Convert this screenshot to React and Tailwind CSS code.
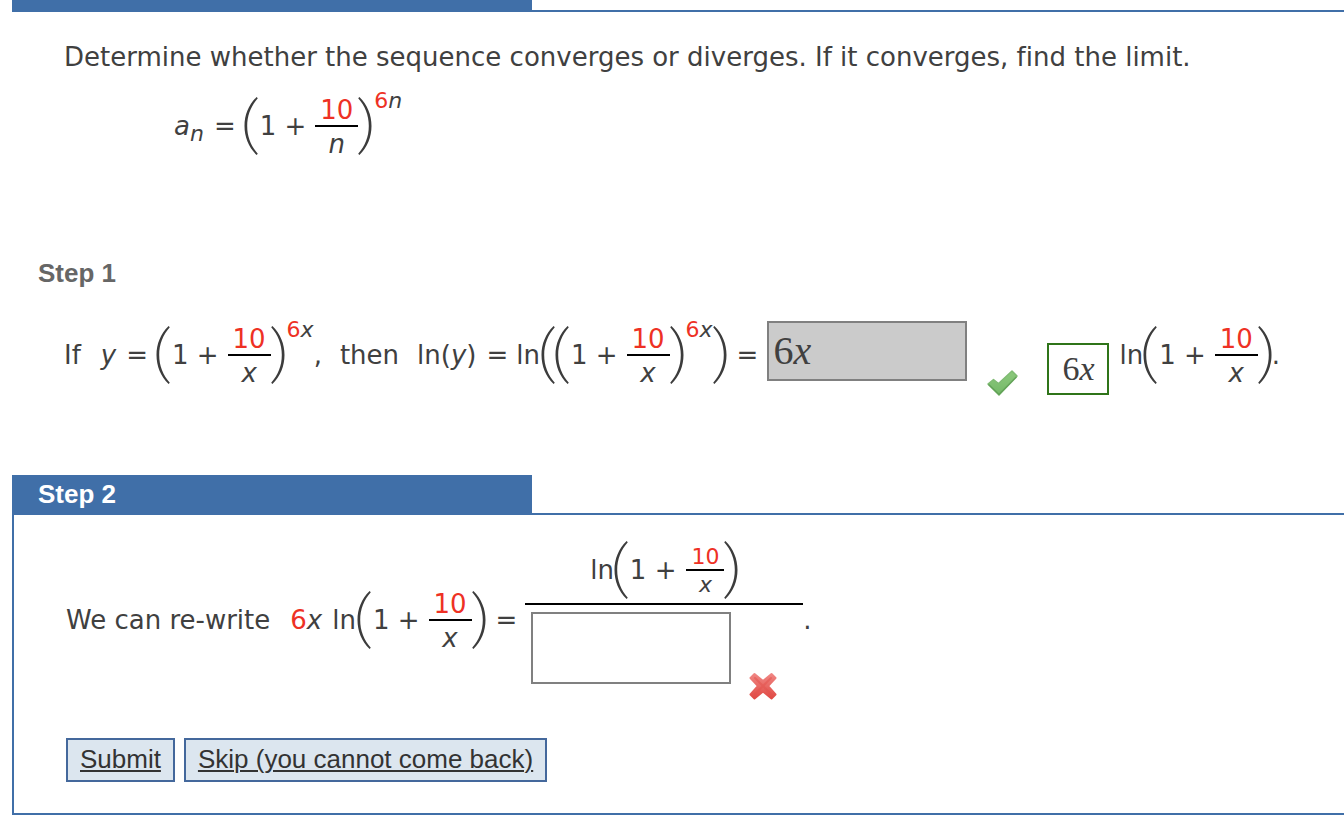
import clsx from 'clsx';

function LeftParen() {
    return (
        <svg className="h-[58px] w-[14px] shrink-0" viewBox="0 0 14 58" fill="#3c3c3c" aria-hidden="true">
            <path d="M12.600 0C4.500 8 .5 18 .5 29s4 21 12.100 29l1.200-1.200C7 49 3.200 40 3.200 29S7 9 13.800 1.200Z" />
        </svg>
    );
}

function RightParen() {
    return (
        <svg className="h-[58px] w-[14px] shrink-0" viewBox="0 0 14 58" fill="#3c3c3c" aria-hidden="true">
            <path d="M1.400 0C9.500 8 13.500 18 13.500 29S9.500 50 1.400 58L.2 56.800C7 49 10.800 40 10.800 29S7 9 .2 1.200Z" />
        </svg>
    );
}

function Fraction({ top, bottom, small }) {
    return (
        <span className={clsx('flex flex-col pt-1 text-center', small ? 'w-[38px] text-[22px]' : 'w-[43px]')}>
            <span className={clsx('border-b-2 border-black text-[#ee3124]', small ? 'leading-[24px]' : 'leading-[30px]')}>
                {top}
            </span>
            <i className={small ? 'leading-[28px]' : 'leading-[34px]'}>{bottom}</i>
        </span>
    );
}

// (1 + 10/v), optionally raised to 6v
function Group({ variable, power, small }) {
    return (
        <span className="flex items-center">
            <LeftParen />
            <span className={clsx('ml-0.5', small ? 'mr-2.5' : 'mr-[9px]')}>1 +</span>
            <Fraction top="10" bottom={variable} small={small} />
            <RightParen />
            {power && (
                <span className="mb-[50px] ml-0.5 text-[22px]">
                    <span className="text-[#ee3124]">6</span>
                    <i>{variable}</i>
                </span>
            )}
        </span>
    );
}

function SectionHeader({ children }) {
    return (
        <h2 className="h-[38px] w-[520px] max-w-full bg-[#406fa8] pl-[26px] font-['Liberation_Sans',Arial,sans-serif] leading-[38px] font-bold text-white">
            {children}
        </h2>
    );
}

function CheckMark() {
    return (
        <svg className="h-[26px] w-[31px]" viewBox="0 0 31 26" role="img" aria-label="Correct">
            <defs>
                <linearGradient id="check" x1="0" y1="0" x2="0" y2="1">
                    <stop offset="0" stopColor="#8cc97c" />
                    <stop offset="1" stopColor="#74b868" />
                </linearGradient>
            </defs>
            <path
                d="M1 14 6.500 9.500 11.500 13.500 25 1 30 6 12 25Z"
                fill="url(#check)"
                stroke="#7fbb73"
                strokeWidth="1.500"
                strokeLinejoin="round"
            />
            <path d="m1.500 14.500 10.500 10L29.500 7" fill="none" stroke="#4f9145" strokeWidth="1.500" opacity=".6" />
        </svg>
    );
}

function CrossMark() {
    return (
        <svg className="h-[28px] w-[28px]" viewBox="0 0 28 28" role="img" aria-label="Incorrect">
            <defs>
                <linearGradient id="cross" x1="0" y1="0" x2="0" y2="1">
                    <stop offset="0" stopColor="#f08683" />
                    <stop offset="1" stopColor="#e04a44" />
                </linearGradient>
            </defs>
            <path
                d="M5.500 2 14 9 22.500 2 26.500 6 19 14 26.500 22.500 22.500 26.500 14 19.500 5.500 26.500 1.500 22.500 9 14 1.500 6Z"
                fill="url(#cross)"
                stroke="url(#cross)"
                strokeWidth="2"
                strokeLinejoin="round"
            />
            <path d="m6 6 16 16M22 6 6 22" stroke="#e4524d" strokeWidth="2" strokeLinecap="round" opacity=".5" />
        </svg>
    );
}

function ActionButton({ children }) {
    return (
        <button
            type="button"
            className="border-2 border-[#44689c] bg-[#dce6ef] px-3 pt-[3px] pb-[5px] font-['Liberation_Sans',Arial,sans-serif] leading-8 text-[#333] underline decoration-2 underline-offset-2"
        >
            {children}
        </button>
    );
}

export default function App() {
    return (
        <main className="overflow-hidden bg-white pl-3 font-['DejaVu_Sans',Verdana,sans-serif] text-[26px] leading-8 whitespace-nowrap text-[#404040] [font-variant-ligatures:none]">
            <section className="-mt-7">
                <SectionHeader>Tutorial Exercise</SectionHeader>
                <div className="border-t-2 border-[#406fa8] pt-[29px] pl-[52px]">
                    <p>Determine whether the sequence converges or diverges. If it converges, find the limit.</p>
                    <div className="mt-3 ml-[110px] flex items-center">
                        <i>a</i>
                        <i className="mt-4 text-[22px]">n</i>
                        <span className="mr-2 ml-2.5">=</span>
                        <Group variable="n" power />
                    </div>
                </div>
            </section>

            <section className="mt-[90px] pl-[26px]">
                <h2 className="font-['Liberation_Sans',Arial,sans-serif] font-bold text-[#666]">Step 1</h2>
                <div className="mt-[25px] flex items-center pl-[26px]">
                    <span>If</span>
                    <i className="ml-5">y</i>
                    <span className="mr-2 ml-2.5">=</span>
                    <Group variable="x" power />
                    <span>,</span>
                    <span className="ml-[18px]">then</span>
                    <span className="ml-[18px]">
                        ln(<i>y</i>)
                    </span>
                    <span className="mr-2 ml-2.5">=</span>
                    <span className="mr-px">ln</span>
                    <LeftParen />
                    <Group variable="x" power />
                    <RightParen />
                    <span className="mr-2 ml-2.5">=</span>
                    <label className="relative mb-2 ml-px flex">
                        <input
                            aria-label="Answer 1"
                            readOnly
                            className="h-[60px] w-[200px] border-2 border-[#808080] bg-[#cbcbcb]"
                        />
                        <span className="pointer-events-none absolute inset-y-0 left-1.5 font-['Liberation_Serif',serif] text-[40px] leading-[60px]">
                            6<i>x</i>
                        </span>
                    </label>
                    <span className="mt-14 ml-5">
                        <CheckMark />
                    </span>
                    <span className="mt-7 mr-2.5 ml-[29px] border-2 border-[#2f7419] px-[13px] py-0.5 font-['Liberation_Serif',serif] text-[34px] leading-[44px]">
                        6<i>x</i>
                    </span>
                    <span>ln</span>
                    <Group variable="x" />
                    <span>.</span>
                </div>
            </section>

            <section className="mt-[79px]">
                <SectionHeader>Step 2</SectionHeader>
                <div className="border-y-2 border-l-2 border-[#406fa8] pt-6 pb-[31px] pl-[52px]">
                    <div className="flex items-center">
                        <span>We can re-write</span>
                        <span className="ml-5">
                            <span className="text-[#ee3124]">6</span>
                            <i>x</i>
                        </span>
                        <span className="mr-px ml-2.5">ln</span>
                        <Group variable="x" />
                        <span className="mr-2 ml-2.5">=</span>
                        <span className="flex flex-col">
                            <span className="flex items-center justify-center border-b-2 border-black pt-0.5 pb-1">
                                <span>ln</span>
                                <Group variable="x" small />
                            </span>
                            <span className="flex items-start px-1.5 pt-[7px]">
                                <input
                                    aria-label="Answer 2"
                                    className="h-[72px] w-[200px] border-2 border-[#808080] bg-white px-1.5 font-['Liberation_Serif',serif] text-[40px]"
                                />
                                <span className="mt-[60px] mr-5 ml-[18px]">
                                    <CrossMark />
                                </span>
                            </span>
                        </span>
                        <span>.</span>
                    </div>
                    <div className="mt-[38px] flex gap-[9px]">
                        <ActionButton>Submit</ActionButton>
                        <ActionButton>Skip (you cannot come back)</ActionButton>
                    </div>
                </div>
            </section>
        </main>
    );
}
